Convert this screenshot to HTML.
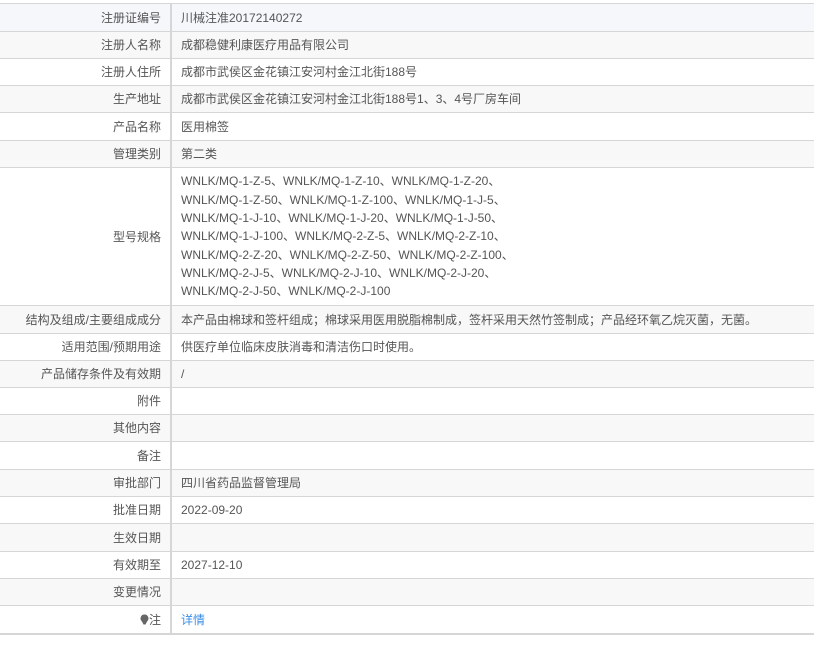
<!DOCTYPE html>
<html><head><meta charset="utf-8"><style>
body{margin:0;background:#fff;width:814px;height:645px;overflow:hidden;font-family:"Liberation Sans","Noto Sans CJK SC",sans-serif;font-size:12px;color:#555}
table{position:absolute;top:3px;left:0;width:814px;border-collapse:collapse}
td{border-top:1px solid #d6d6d6;border-bottom:1px solid #d6d6d6;padding:0 9px;height:26px;line-height:18px}
tr.t td{height:27px}
td.l{width:152px;text-align:right;border-right:2px solid #d6d6d6}
tr:nth-child(even){background:#f8f8f8}
tr:first-child{background:#f5f7fb}
tr.last td{border-bottom:2px solid #d6d6d6}
a{color:#3a8ee6;text-decoration:none}
</style></head><body>
<table>
<tr class="t"><td class="l">注册证编号</td><td>川械注准20172140272</td></tr>
<tr><td class="l">注册人名称</td><td>成都稳健利康医疗用品有限公司</td></tr>
<tr><td class="l">注册人住所</td><td>成都市武侯区金花镇江安河村金江北街188号</td></tr>
<tr><td class="l">生产地址</td><td>成都市武侯区金花镇江安河村金江北街188号1、3、4号厂房车间</td></tr>
<tr class="t"><td class="l">产品名称</td><td>医用棉签</td></tr>
<tr><td class="l">管理类别</td><td>第二类</td></tr>
<tr><td class="l" style="height:137px">型号规格</td><td style="line-height:18.3px">WNLK/MQ-1-Z-5、WNLK/MQ-1-Z-10、WNLK/MQ-1-Z-20、<br>WNLK/MQ-1-Z-50、WNLK/MQ-1-Z-100、WNLK/MQ-1-J-5、<br>WNLK/MQ-1-J-10、WNLK/MQ-1-J-20、WNLK/MQ-1-J-50、<br>WNLK/MQ-1-J-100、WNLK/MQ-2-Z-5、WNLK/MQ-2-Z-10、<br>WNLK/MQ-2-Z-20、WNLK/MQ-2-Z-50、WNLK/MQ-2-Z-100、<br>WNLK/MQ-2-J-5、WNLK/MQ-2-J-10、WNLK/MQ-2-J-20、<br>WNLK/MQ-2-J-50、WNLK/MQ-2-J-100</td></tr>
<tr class="t"><td class="l">结构及组成/主要组成成分</td><td>本产品由棉球和签杆组成；棉球采用医用脱脂棉制成，签杆采用天然竹签制成；产品经环氧乙烷灭菌，无菌。</td></tr>
<tr><td class="l">适用范围/预期用途</td><td>供医疗单位临床皮肤消毒和清洁伤口时使用。</td></tr>
<tr><td class="l">产品储存条件及有效期</td><td>/</td></tr>
<tr><td class="l">附件</td><td></td></tr>
<tr><td class="l">其他内容</td><td></td></tr>
<tr class="t"><td class="l">备注</td><td></td></tr>
<tr><td class="l">审批部门</td><td>四川省药品监督管理局</td></tr>
<tr><td class="l">批准日期</td><td>2022-09-20</td></tr>
<tr class="t"><td class="l">生效日期</td><td></td></tr>
<tr><td class="l">有效期至</td><td>2027-12-10</td></tr>
<tr><td class="l">变更情况</td><td></td></tr>
<tr class="last t"><td class="l"><svg width="9" height="11" viewBox="0 0 9 11" style="vertical-align:-1px"><path d="M4.5 0.5a4 4 0 0 1 2.5 7.1L5.5 10.5h-2L2 7.6A4 4 0 0 1 4.5 0.5z" fill="#666"/></svg>注</td><td><a>详情</a></td></tr>
</table>
</body></html>
